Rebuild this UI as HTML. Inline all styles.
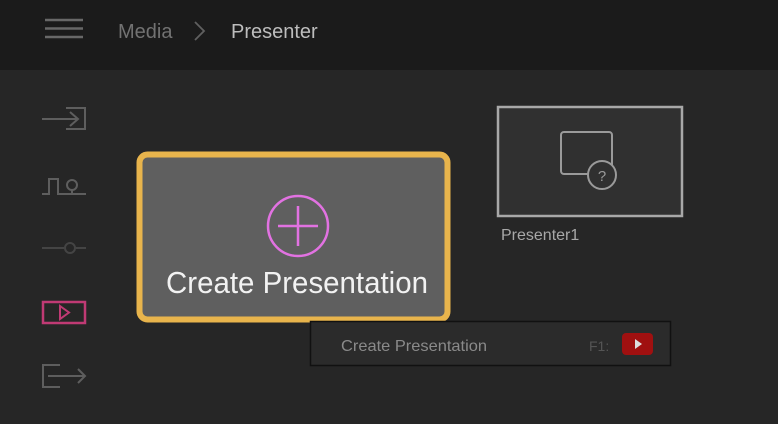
<!DOCTYPE html>
<html><head><style>
html,body{margin:0;padding:0;width:778px;height:424px;overflow:hidden;background:#262626;font-family:"Liberation Sans",sans-serif}
</style></head><body>
<svg width="778" height="424" xmlns="http://www.w3.org/2000/svg" style="position:absolute;left:0;top:0">
<rect x="0" y="0" width="778" height="70" fill="#1b1b1b"/>
<rect x="0" y="70" width="778" height="354" fill="#262626"/>
<g stroke="#686868" stroke-width="2.5">
<line x1="45" y1="20" x2="83" y2="20"/><line x1="45" y1="28.5" x2="83" y2="28.5"/><line x1="45" y1="37" x2="83" y2="37"/>
</g>
<text x="118" y="38" font-size="20" fill="#727272">Media</text>
<path d="M195 22 L204 31 L195 40" fill="none" stroke="#606060" stroke-width="1.8"/>
<text x="231" y="38" font-size="20" fill="#bdbdbd">Presenter</text>

<g fill="none" stroke="#5e5e5e" stroke-width="2">
<path d="M42 119 H78 M70 112 L78 119 L70 126"/>
<path d="M66 108 H85 V129 H66"/>
<path d="M42 194 H49 V179 H58 V194 H86"/>
<circle cx="72" cy="185" r="5"/><path d="M72 190 V194"/>
<path d="M60 365 H43 V387 H60"/>
<path d="M48 376 H85 M78 369 L85 376 L78 383"/>
</g>
<g fill="none" stroke="#444" stroke-width="2">
<path d="M42 248 H64 M76 248 H86"/><circle cx="70" cy="248" r="5"/>
</g>
<rect x="43" y="302" width="42" height="21" fill="none" stroke="#c03a74" stroke-width="2.5"/>
<path d="M60 306 L69 312.5 L60 319 Z" fill="none" stroke="#c03a74" stroke-width="2"/>

<rect x="139.5" y="154.5" width="308" height="165" rx="8" fill="#5f5f5f" stroke="#e8b44c" stroke-width="6"/>
<circle cx="298" cy="226" r="30" fill="none" stroke="#e272e2" stroke-width="2.5"/>
<path d="M278 226 H318 M298 206 V246" stroke="#e272e2" stroke-width="2.5"/>
<text x="166" y="293" font-size="31" fill="#f2f2f2" textLength="262" lengthAdjust="spacingAndGlyphs">Create Presentation</text>

<rect x="498" y="107" width="184" height="109" fill="#303030" stroke="#a8a8a8" stroke-width="2.5"/>
<rect x="561" y="132" width="51" height="42" rx="3" fill="none" stroke="#9a9a9a" stroke-width="2"/>
<circle cx="602" cy="175" r="14" fill="#303030" stroke="#9a9a9a" stroke-width="2"/>
<text x="602" y="181" font-size="15" fill="#9a9a9a" text-anchor="middle">?</text>
<text x="501" y="240" font-size="16" fill="#a8a8a8">Presenter1</text>

<rect x="310.5" y="321.5" width="360" height="44" fill="#2b2b2b" stroke="#111" stroke-width="1.5"/>
<text x="341" y="351" font-size="16" fill="#8a8a8a" textLength="146" lengthAdjust="spacingAndGlyphs">Create Presentation</text>
<text x="589" y="351" font-size="14" fill="#555">F1:</text>
<rect x="622" y="333" width="31" height="22" rx="4" fill="#a01010"/>
<path d="M635 339 L642 344 L635 349 Z" fill="#ddd"/>
</svg>
</body></html>
